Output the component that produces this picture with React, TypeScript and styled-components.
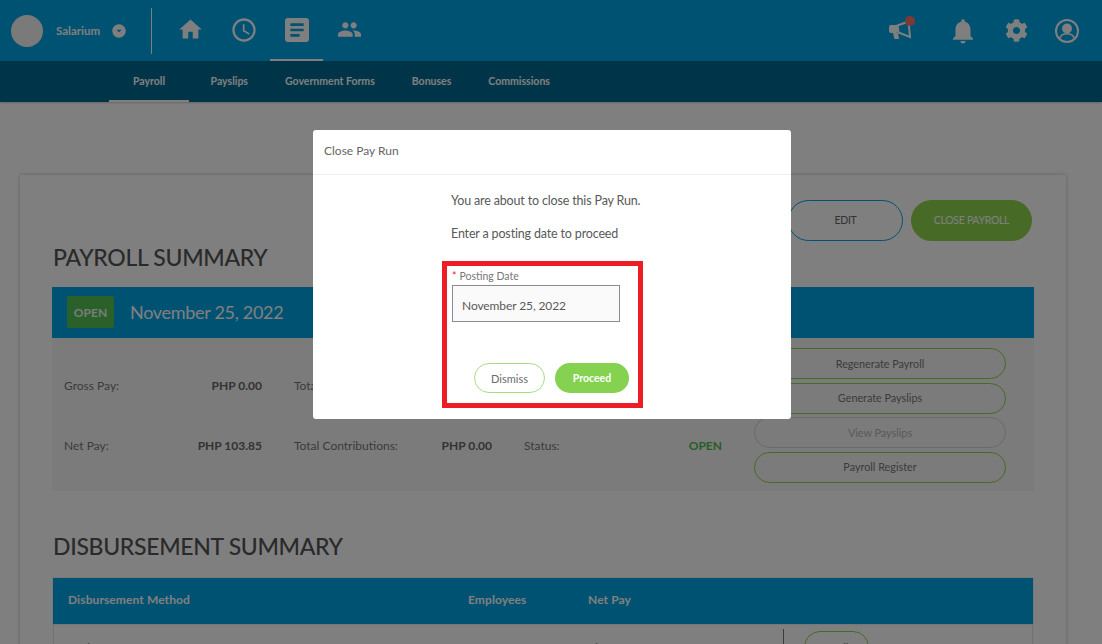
import { createGlobalStyle, styled } from 'styled-components';
import {
  MdArrowDropDownCircle,
  MdArticle,
  MdHome,
  MdNotifications,
  MdOutlineAccessTime,
  MdPeople,
} from 'react-icons/md';
import { FaCog } from 'react-icons/fa';

const GlobalStyle = createGlobalStyle`
  html, body {
    margin: 0;
    padding: 0;
    background: #fff;
    font-family: 'Lato', 'Noto Sans', sans-serif;
    color: #777;
  }
  * { box-sizing: border-box; }
`;

const Page = styled.div`
  position: relative;
  width: 1102px;
  height: 644px;
  overflow: hidden;
`;

const TopBar = styled.header`
  display: flex;
  align-items: center;
  height: 61px;
  padding-left: 11px;
  background: #00a5e5;
  color: #fff;
`;
const Avatar = styled.div`
  width: 32px;
  height: 32px;
  border-radius: 50%;
  background: #f5f5f5;
  margin-right: 13px;
`;
const BrandName = styled.span`
  font-size: 11.5px;
  font-weight: 700;
  width: 55px;
`;
const Divider = styled.div`
  width: 1px;
  height: 46px;
  background: #fff;
  margin-left: 24px;
  margin-right: 12px;
`;
const IconTab = styled.div<{ $active?: boolean }>`
  display: flex;
  align-items: center;
  justify-content: center;
  width: 53px;
  height: 61px;
  border-bottom: 2px solid ${(p) => (p.$active ? '#fff' : 'transparent')};
`;
const RightIcons = styled.div`
  display: flex;
  align-items: center;
  margin-left: auto;
  padding-right: 23px;
  gap: 27px;
`;
const Megaphone = styled.div`
  position: relative;
  display: flex;
  margin-right: 8px;
`;
const RedDot = styled.span`
  position: absolute;
  top: -3px;
  left: 16px;
  width: 10px;
  height: 10px;
  border-radius: 50%;
  background: #ff7070;
`;

const SubNav = styled.nav`
  display: flex;
  height: 41px;
  padding-left: 109px;
  background: #006a92;
  box-shadow: 0 1px 2px rgba(0, 0, 0, 0.2);
`;
const SubTab = styled.div<{ $active?: boolean }>`
  display: flex;
  align-items: center;
  padding: 0 ${(p) => (p.$active ? 24 : 18.5)}px;
  margin-right: ${(p) => (p.$active ? 3 : 0)}px;
  font-size: 10.5px;
  font-weight: 700;
  color: #fff;
  border-bottom: 2px solid ${(p) => (p.$active ? '#fff' : 'transparent')};
`;

const Content = styled.main`
  padding: 73px 36px 0 20px;
`;
const Card = styled.section`
  width: 1046px;
  padding: 25px 32px 0;
  background: #fff;
  box-shadow: 0 0 4px rgba(0, 0, 0, 0.25);
`;
const ActionRow = styled.div`
  display: flex;
  justify-content: flex-end;
  gap: 8px;
  padding-right: 2px;
`;
const PillButton = styled.div<{ $filled?: boolean }>`
  display: flex;
  align-items: center;
  justify-content: center;
  height: 41px;
  padding-bottom: 1px;
  width: ${(p) => (p.$filled ? 121 : 115)}px;
  border-radius: 21px;
  font-size: 10.5px;
  letter-spacing: -0.3px;
  color: ${(p) => (p.$filled ? '#fff' : '#666')};
  background: ${(p) => (p.$filled ? '#8ed64f' : 'transparent')};
  border: ${(p) => (p.$filled ? 'none' : '1px solid #00a5e5')};
`;
const SectionTitle = styled.h2<{ $top?: number; $bottom: number }>`
  margin: ${(p) => p.$top ?? 1}px 0 ${(p) => p.$bottom}px 1px;
  height: 30px;
  line-height: 30px;
  font-size: 23px;
  font-weight: 500;
  letter-spacing: -0.32px;
  color: #555;
`;
const SummaryBand = styled.div`
  display: flex;
  align-items: center;
  height: 51px;
  padding: 0 0 0 15px;
  background: #00a5e5;
`;
const OpenBadge = styled.span`
  display: flex;
  align-items: center;
  justify-content: center;
  width: 47px;
  height: 32px;
  margin: 0 16px 1px 0;
  border-radius: 2px;
  background: #54c054;
  color: #f2f8f2;
  font-size: 12px;
  font-weight: 700;
`;
const BandDate = styled.span`
  padding-bottom: 2px;
  font-size: 18px;
  letter-spacing: -0.3px;
  color: #fff;
`;
const SummaryPanel = styled.div`
  display: flex;
  gap: 32px;
  height: 153px;
  padding: 10px 0 0 12px;
  background: #f6f6f6;
`;
const SummaryGrid = styled.div`
  display: grid;
  grid-template-columns: repeat(3, 198px);
  grid-auto-rows: 60px;
  column-gap: 32px;
  padding-top: 7px;
`;
const Cell = styled.div`
  display: flex;
  align-items: center;
  justify-content: space-between;
  font-size: 12px;
  color: #777;
`;
const CellValue = styled.strong<{ $open?: boolean }>`
  font-weight: 700;
  color: ${(p) => (p.$open ? '#50bc50' : '#666')};
`;
const SummaryActions = styled.div`
  display: flex;
  flex-direction: column;
  gap: 3.5px;
  width: 252px;
`;
const OutlineButton = styled.div<{ $disabled?: boolean }>`
  display: flex;
  align-items: center;
  justify-content: center;
  height: 31px;
  padding-bottom: 1px;
  border-radius: 16px;
  font-size: 10.8px;
  border: 1px solid ${(p) => (p.$disabled ? '#d4d4d4' : '#8ed64f')};
  color: ${(p) => (p.$disabled ? '#b5b5b5' : '#777')};
`;

const MethodTable = styled.div`
  margin: 0 1px;
`;
const TableHead = styled.div`
  display: grid;
  grid-template-columns: 400px 120px 1fr;
  align-items: center;
  height: 46px;
  padding: 0 0 3px 15px;
  background: #00a5e5;
  box-shadow: 0 0 1px rgba(0, 0, 0, 0.4);
  font-size: 12px;
  font-weight: 700;
  letter-spacing: 0.1px;
  color: #fff;
`;
const TableRow = styled.div`
  display: grid;
  grid-template-columns: 400px 120px 195px 1fr;
  align-items: center;
  height: 46px;
  padding-left: 14px;
  border-left: 1px solid #e4e4e4;
  border-right: 1px solid #e4e4e4;
  font-size: 12px;
  color: #777;
`;
const DetailCell = styled.div`
  display: flex;
  align-items: center;
  height: 36px;
  padding-left: 20px;
  border-left: 1px solid #777;
`;
const DetailButton = styled.div`
  display: flex;
  align-items: center;
  justify-content: center;
  width: 65px;
  height: 32px;
  border: 1px solid #8ed64f;
  border-radius: 16px;
  font-size: 11px;
`;

const Overlay = styled.div`
  position: absolute;
  inset: 0;
  display: flex;
  justify-content: center;
  padding: 130px 311px 0 313px;
  background: rgba(0, 0, 0, 0.5);
`;
const Modal = styled.div`
  width: 478px;
  height: 289px;
  background: #fff;
  border-radius: 3px;
  color: #595959;
`;
const ModalHeader = styled.div`
  display: flex;
  align-items: center;
  height: 45px;
  padding: 0 0 3px 11px;
  font-size: 12px;
  color: #666;
  border-bottom: 1px solid #eee;
`;
const ModalBody = styled.div`
  display: flex;
  flex-direction: column;
  padding: 0 0 0 129px;
`;
const Message = styled.p<{ $top: number }>`
  margin: ${(p) => p.$top}px 0 0 9px;
  height: 18px;
  line-height: 18px;
  font-size: 12.5px;
  letter-spacing: -0.16px;
`;
const Highlight = styled.div`
  display: flex;
  flex-direction: column;
  width: 201px;
  height: 147px;
  margin-top: 18px;
  padding: 3px 0 0 5px;
  border: 5px solid #ee1c25;
`;
const FieldLabel = styled.label`
  height: 14px;
  line-height: 14px;
  font-size: 10.5px;
  color: #777;
`;
const Required = styled.span`
  color: #ee1c25;
  margin-right: 3px;
`;
const DateInput = styled.div`
  display: flex;
  align-items: center;
  width: 168px;
  height: 37px;
  margin-top: 2px;
  padding: 3px 0 0 9px;
  background: #fafafa;
  border: 1px solid #8a8c90;
  font-size: 12px;
  letter-spacing: -0.1px;
`;
const ModalActions = styled.div`
  display: flex;
  gap: 10px;
  margin-top: 41px;
  padding-left: 22px;
`;
const DismissButton = styled.div`
  display: flex;
  align-items: center;
  justify-content: center;
  width: 71px;
  height: 30px;
  border: 1px solid #a8dc82;
  border-radius: 15px;
  font-size: 11px;
  color: #6b6b6b;
`;
const ProceedButton = styled(DismissButton)`
  width: 74px;
  border: none;
  background: #84d24f;
  color: #fff;
  font-size: 10.5px;
  font-weight: 700;
`;

const subTabs = ['Payslips', 'Government Forms', 'Bonuses', 'Commissions'];

function MegaphoneIcon() {
  return (
    <svg width="24" height="24" viewBox="0 0 24 24" fill="currentColor">
      <rect x="0" y="6" width="9" height="8" rx="2" />
      <path d="M4 14h5l1 6H5.500z" />
      <path d="M8.500 6.500 19.500 2.500 21 18 9.500 13.500z" fill="none" stroke="currentColor" strokeWidth="2" />
    </svg>
  );
}

function AccountIcon() {
  return (
    <svg width="24" height="24" viewBox="0 0 24 24" fill="currentColor">
      <circle cx="12" cy="12" r="11" fill="none" stroke="currentColor" strokeWidth="2" />
      <circle cx="12" cy="9.500" r="5" />
      <path
        d="M4.800 19.500c.8-3.200 3.600-4.800 7.200-4.800s6.400 1.600 7.200 4.800"
        fill="none"
        stroke="currentColor"
        strokeWidth="1.600"
      />
    </svg>
  );
}

export default function App() {
  return (
    <Page>
      <GlobalStyle />
      <TopBar>
        <Avatar />
        <BrandName>Salarium</BrandName>
        <MdArrowDropDownCircle size={16} />
        <Divider />
        <IconTab>
          <MdHome size={27} />
        </IconTab>
        <IconTab>
          <MdOutlineAccessTime size={28} />
        </IconTab>
        <IconTab $active>
          <MdArticle size={32} />
        </IconTab>
        <IconTab>
          <MdPeople size={25} />
        </IconTab>
        <RightIcons>
          <Megaphone>
            <MegaphoneIcon />
            <RedDot />
          </Megaphone>
          <MdNotifications size={30} />
          <FaCog size={23} />
          <AccountIcon />
        </RightIcons>
      </TopBar>
      <SubNav>
        <SubTab $active>Payroll</SubTab>
        {subTabs.map((tab) => (
          <SubTab key={tab}>{tab}</SubTab>
        ))}
      </SubNav>
      <Content>
        <Card>
          <ActionRow>
            <PillButton>EDIT</PillButton>
            <PillButton $filled>CLOSE PAYROLL</PillButton>
          </ActionRow>
          <SectionTitle $bottom={15}>PAYROLL SUMMARY</SectionTitle>
          <SummaryBand>
            <OpenBadge>OPEN</OpenBadge>
            <BandDate>November 25, 2022</BandDate>
          </SummaryBand>
          <SummaryPanel>
            <SummaryGrid>
              <Cell>
                Gross Pay:<CellValue>PHP 0.00</CellValue>
              </Cell>
              <Cell>Total</Cell>
              <Cell />
              <Cell>
                Net Pay:<CellValue>PHP 103.85</CellValue>
              </Cell>
              <Cell>
                Total Contributions:<CellValue>PHP 0.00</CellValue>
              </Cell>
              <Cell>
                Status:<CellValue $open>OPEN</CellValue>
              </Cell>
            </SummaryGrid>
            <SummaryActions>
              <OutlineButton>Regenerate Payroll</OutlineButton>
              <OutlineButton>Generate Payslips</OutlineButton>
              <OutlineButton $disabled>View Payslips</OutlineButton>
              <OutlineButton>Payroll Register</OutlineButton>
            </SummaryActions>
          </SummaryPanel>
          <SectionTitle $top={40} $bottom={17}>
            DISBURSEMENT SUMMARY
          </SectionTitle>
          <MethodTable>
            <TableHead>
              <span>Disbursement Method</span>
              <span>Employees</span>
              <span>Net Pay</span>
            </TableHead>
            <TableRow>
              <span>Cash</span>
              <strong>1</strong>
              <span>Php 103.85</span>
              <DetailCell>
                <DetailButton>Details</DetailButton>
              </DetailCell>
            </TableRow>
          </MethodTable>
        </Card>
      </Content>
      <Overlay>
        <Modal>
          <ModalHeader>Close Pay Run</ModalHeader>
          <ModalBody>
            <Message $top={17}>You are about to close this Pay Run.</Message>
            <Message $top={15}>Enter a posting date to proceed</Message>
            <Highlight>
              <FieldLabel>
                <Required>*</Required>Posting Date
              </FieldLabel>
              <DateInput>November 25, 2022</DateInput>
              <ModalActions>
                <DismissButton>Dismiss</DismissButton>
                <ProceedButton>Proceed</ProceedButton>
              </ModalActions>
            </Highlight>
          </ModalBody>
        </Modal>
      </Overlay>
    </Page>
  );
}
